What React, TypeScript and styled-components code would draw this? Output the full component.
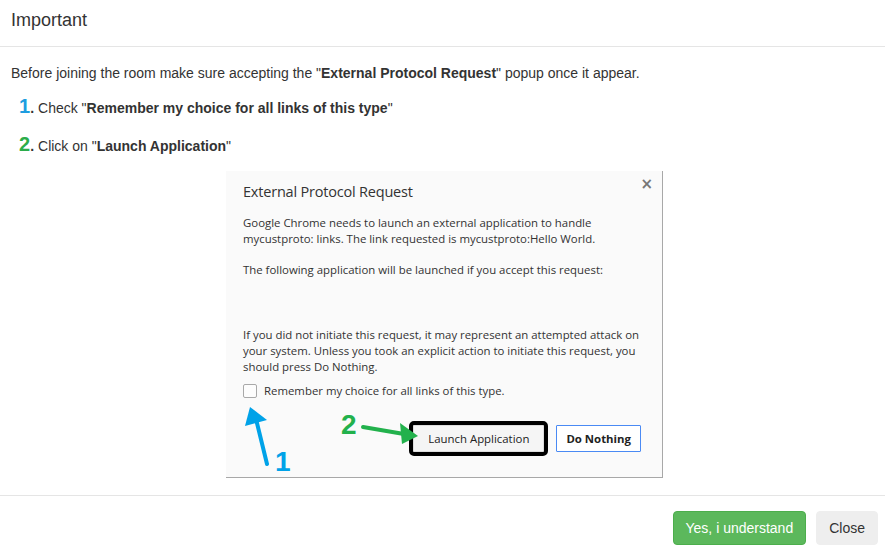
import React from "react"
import styled, { createGlobalStyle } from "styled-components"

const GlobalStyle = createGlobalStyle`
    html, body {
        margin: 0;
        padding: 0;
        background: #fff;
        overflow: hidden;
    }
    body {
        font-family: "Liberation Sans", Arial, Helvetica, sans-serif;
        font-size: 14px;
        line-height: 20px;
        color: #333;
    }
`

const Modal = styled.div`
    width: 885px;
    height: 552px;
    display: flex;
    flex-direction: column;
`

const Header = styled.div`
    padding: 7px 11px 13px;
    border-bottom: 1px solid #e5e5e5;
`

const Title = styled.h4`
    margin: 0;
    font-size: 18px;
    font-weight: 400;
    line-height: 26px;
    color: #333;
`

const Body = styled.div`
    padding: 16px 11px 17px;
    display: flex;
    flex-direction: column;
`

const Lead = styled.p`
    margin: 0;
`

const Steps = styled.ol`
    list-style: none;
    margin: 9px 0 0;
    padding: 0 0 0 8px;
    display: flex;
    flex-direction: column;
    gap: 10px;
`

const Step = styled.li`
    display: flex;
    align-items: baseline;
    height: 28px;
    line-height: 28px;
`

const Num = styled.span<{ $color: string }>`
    font-size: 20px;
    font-weight: 700;
    color: ${(p) => p.$color};
`

const Dot = styled.span`
    font-size: 14px;
    font-weight: 700;
    margin-right: 4px;
`

const ShotWrap = styled.div`
    display: flex;
    justify-content: center;
    padding-left: 4px;
    margin-top: 13px;
`

const Shot = styled.div`
    position: relative;
    width: 437px;
    height: 307px;
    box-sizing: border-box;
    background: #fafafa;
    border-right: 1px solid #a8a8a8;
    border-bottom: 1px solid #a8a8a8;
    padding: 11px 21px 0 17px;
    display: flex;
    flex-direction: column;
    font-family: "Open Sans", "Noto Sans", sans-serif;
    color: #333;
`

const CloseX = styled.span`
    position: absolute;
    top: 3px;
    right: 9px;
    font-size: 15px;
    font-weight: 700;
    color: #777;
    font-family: "DejaVu Sans", sans-serif;
`

const ShotTitle = styled.div`
    font-size: 14.5px;
    line-height: 20px;
    letter-spacing: -0.2px;
`

const ShotText = styled.p<{ $gap: number }>`
    margin: ${(p) => p.$gap}px 0 0;
    font-size: 11.4px;
    line-height: 16.2px;
    white-space: nowrap;
`

const CheckRow = styled.label`
    margin-top: 8px;
    display: flex;
    align-items: center;
    gap: 7px;
    font-size: 11.4px;
    line-height: 16px;
`

const Box = styled.span`
    width: 12px;
    height: 12px;
    border: 1px solid #a9a9a9;
    border-radius: 2px;
    background: #fdfdfd;
`

const ButtonRow = styled.div`
    margin-top: 26px;
    display: flex;
    justify-content: flex-end;
    gap: 12px;
`

const ChromeButton = styled.button<{ $primary?: boolean }>`
    font-family: "Open Sans", "Noto Sans", sans-serif;
    font-size: 11.4px;
    height: 27px;
    box-sizing: border-box;
    padding: 0 ${(p) => (p.$primary ? 9 : 14)}px;
    background: ${(p) => (p.$primary ? "#fff" : "#f5f5f5")};
    color: #222;
    font-weight: ${(p) => (p.$primary ? 700 : 400)};
    border: 1px solid ${(p) => (p.$primary ? "#4a8af4" : "#ddd")};
    outline: ${(p) => (p.$primary ? "none" : "4px solid #000")};
    border-radius: 1px;
`

const Overlay = styled.svg`
    position: absolute;
    left: 0;
    top: 0;
    width: 437px;
    height: 307px;
    pointer-events: none;
`

const Marker = styled.span<{ $color: string; $x: number; $y: number }>`
    position: absolute;
    left: ${(p) => p.$x}px;
    top: ${(p) => p.$y}px;
    font-family: "Liberation Sans", Arial, sans-serif;
    font-size: 28px;
    line-height: 28px;
    font-weight: 700;
    color: ${(p) => p.$color};
`

const Footer = styled.div`
    margin-top: auto;
    border-top: 1px solid #e5e5e5;
    padding: 15px 7px 8px 11px;
    display: flex;
    justify-content: flex-end;
    gap: 10px;
`

const Button = styled.button<{ $variant: "success" | "default" }>`
    font-family: "Liberation Sans", Arial, sans-serif;
    font-size: 14px;
    line-height: 20px;
    padding: 6px 12px;
    border-radius: 4px;
    border: 1px solid ${(p) => (p.$variant === "success" ? "#4cae4c" : "#eee")};
    background: ${(p) => (p.$variant === "success" ? "#5cb85c" : "#eee")};
    color: ${(p) => (p.$variant === "success" ? "#fff" : "#333")};
`

const BLUE = "#00a2e8"
const GREEN = "#22b14c"

export default function App() {
    return (
        <>
            <GlobalStyle />
            <Modal>
                <Header>
                    <Title>Important</Title>
                </Header>
                <Body>
                    <Lead>
                        Before joining the room make sure accepting the "<b>External Protocol Request</b>" popup once it appear.
                    </Lead>
                    <Steps>
                        <Step>
                            <Num $color="#1e9de0">1</Num>
                            <Dot>.</Dot>
                            <span>Check "<b>Remember my choice for all links of this type</b>"</span>
                        </Step>
                        <Step>
                            <Num $color="#2bac4a">2</Num>
                            <Dot>.</Dot>
                            <span>Click on "<b>Launch Application</b>"</span>
                        </Step>
                    </Steps>
                    <ShotWrap>
                        <Shot>
                            <CloseX>×</CloseX>
                            <ShotTitle>External Protocol Request</ShotTitle>
                            <ShotText $gap={13}>
                                Google Chrome needs to launch an external application to handle<br />
                                mycustproto: links. The link requested is mycustproto:Hello World.
                            </ShotText>
                            <ShotText $gap={15}>
                                The following application will be launched if you accept this request:
                            </ShotText>
                            <ShotText $gap={48}>
                                If you did not initiate this request, it may represent an attempted attack on<br />
                                your system. Unless you took an explicit action to initiate this request, you<br />
                                should press Do Nothing.
                            </ShotText>
                            <CheckRow>
                                <Box />
                                Remember my choice for all links of this type.
                            </CheckRow>
                            <ButtonRow>
                                <ChromeButton>Launch Application</ChromeButton>
                                <ChromeButton $primary>Do Nothing</ChromeButton>
                            </ButtonRow>
                            <Overlay viewBox="0 0 437 307">
                                <line x1="41" y1="293" x2="30" y2="248" stroke={BLUE} strokeWidth="4" strokeLinecap="round" />
                                <polygon points="24,236 19,255 41,249" fill={BLUE} />
                                <line x1="137" y1="256" x2="178" y2="263" stroke={GREEN} strokeWidth="4" strokeLinecap="round" />
                                <polygon points="192,265 174,252 176,273" fill={GREEN} />
                            </Overlay>
                            <Marker $color={BLUE} $x={49} $y={277}>1</Marker>
                            <Marker $color={GREEN} $x={115} $y={240}>2</Marker>
                        </Shot>
                    </ShotWrap>
                </Body>
                <Footer>
                    <Button $variant="success">Yes, i understand</Button>
                    <Button $variant="default">Close</Button>
                </Footer>
            </Modal>
        </>
    )
}
